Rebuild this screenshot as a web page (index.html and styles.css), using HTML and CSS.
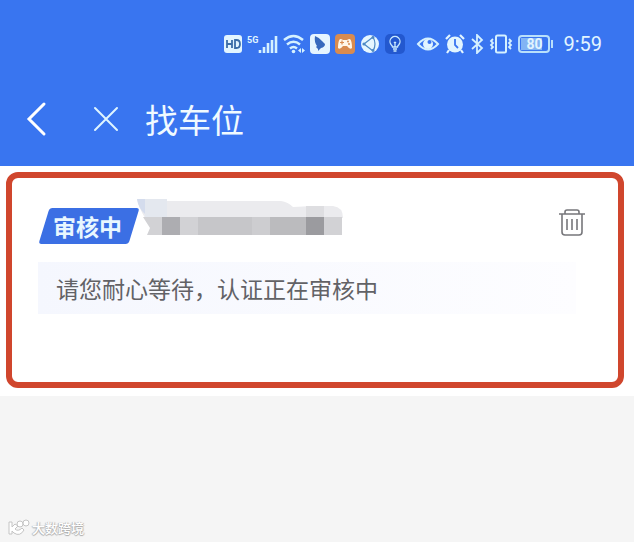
FILE: index.html
```html
<!DOCTYPE html>
<html lang="zh-CN">
<head>
  <meta charset="UTF-8">
  <meta name="viewport" content="width=device-width, initial-scale=1.0">
  <title>找车位</title>
  <link rel="stylesheet" href="styles.css">
</head>
<body>

  <header class="header">
    <div class="status-bar">
      <svg width="18" height="18" viewBox="0 0 18 18"><rect width="18" height="18" rx="3" fill="#e2f5ff"/><path d="M3 5v8M8 5v8M3 9h5M11 5v8h1.500q3.500 0 3.500-4t-3.500-4z" fill="none" stroke="#3c6ea8" stroke-width="1.800"/></svg>
      <div class="signal">
        <span class="network">5G</span>
        <svg width="20" height="20" viewBox="0 0 20 20"><path d="M2 16v3M6 13v6M10 9v10M14 6v13M18 2v17" stroke="#d5f1ff" stroke-width="2.600"/></svg>
      </div>
      <svg width="22" height="20" viewBox="0 0 22 20" fill="none" stroke="#d5f1ff" stroke-width="2.400"><path d="M1 6q9.500-8 19 0M4 10.500q6.500-5.500 13 0M7 14.500q3.500-3 7 0"/><circle cx="10.500" cy="17.500" r="1.800" fill="#d5f1ff" stroke="none"/><path d="M18 14v5l-3-2.500zM19 14v5l3-2.500z" fill="#d5f1ff" stroke="none"/></svg>
      <svg width="20" height="20" viewBox="0 0 20 20"><rect width="20" height="20" rx="4" fill="#e6f5ff"/><path d="M5 2q5 2 7 5l3 3q0 3-4 4l-1 1-2 2 0-2-2-2 1-1q-3-4-2-10z" fill="#3769bd"/></svg>
      <svg width="20" height="20" viewBox="0 0 20 20"><rect width="20" height="20" rx="4" fill="#d98b4f"/><path d="M5 5q2 0 3 1h4q1-1 3-1 2 2 2 9-2 2-5-2H8q-3 4-5 2Q3 7 5 5z" fill="#fff6e8"/><path d="M5 8.500h4M7 6.500v4" stroke="#d98b4f" stroke-width="1.200"/><circle cx="13" cy="7.500" r="1" fill="#d98b4f"/><circle cx="14" cy="10" r="1" fill="#d98b4f"/></svg>
      <svg width="20" height="20" viewBox="0 0 20 20"><circle cx="10" cy="10" r="9" fill="#e6f7ff"/><path d="M4 10l9-7M4 10l9 7M13 3q4 7 0 14" fill="none" stroke="#4e8ac4" stroke-width="1.200"/><circle cx="4" cy="10" r="1.600" fill="#4e8ac4"/><circle cx="13" cy="3.500" r="1.400" fill="#4e8ac4"/><circle cx="13" cy="16.500" r="1.400" fill="#4e8ac4"/></svg>
      <svg width="20" height="20" viewBox="0 0 20 20"><rect width="20" height="20" rx="5" fill="#2358cf"/><path d="M7.500 13q0-1-1.500-2.500a5 5 0 1 1 8 0Q12.500 12 12.500 13zM8 15h4M8.500 17h3M9 8l1 1 1-1M10 9v4" fill="none" stroke="#c9eaff" stroke-width="1.300"/></svg>
      <svg class="eye" width="24" height="20" viewBox="0 0 24 20"><path d="M2 10Q12-1 22 10 12 21 2 10z" fill="none" stroke="#d5f1ff" stroke-width="2"/><circle cx="12" cy="10" r="5" fill="#e2f5ff"/><circle cx="13.500" cy="8" r="2" fill="#3975f0"/></svg>
      <svg width="20" height="20" viewBox="0 0 20 20"><circle cx="10" cy="10.500" r="8" fill="#e2f5ff"/><path d="M1 5l4-4M19 5l-4-4M4 16l-2 3M16 16l2 3" stroke="#e2f5ff" stroke-width="2.200"/><path d="M10 5v6l3 3" fill="none" stroke="#3975f0" stroke-width="1.800"/></svg>
      <svg width="14" height="20" viewBox="0 0 14 20"><path d="M2 5l10 9-5 5V1l5 5-10 9" fill="none" stroke="#d5f1ff" stroke-width="1.800"/></svg>
      <svg width="24" height="20" viewBox="0 0 24 20" fill="none" stroke="#d5f1ff"><rect x="7" y="1.500" width="10" height="17" rx="1.500" stroke-width="2"/><path d="M4 5L2 7l2 2-2 2 2 2-2 2M20 5l2 2-2 2 2 2-2 2 2 2" stroke-width="1.800"/></svg>
      <div class="battery"><span class="battery-level">80</span></div>
      <span class="time">9:59</span>
    </div>

    <nav class="nav">
      <button class="nav-button" aria-label="返回">
        <svg width="24" height="36" viewBox="0 0 24 36"><path d="M20 3L5 18l15 15" fill="none" stroke="#fff" stroke-width="3" stroke-linecap="round"/></svg>
      </button>
      <button class="nav-button" aria-label="关闭">
        <svg width="28" height="28" viewBox="0 0 28 28"><path d="M3 3l22 22M25 3L3 25" stroke="#dff5ff" stroke-width="2" stroke-linecap="round"/></svg>
      </button>
      <h1 class="title">找车位</h1>
    </nav>
  </header>

  <main class="content">
    <section class="card">
      <div class="card-head">
        <span class="badge">审核中</span>
        <svg class="plate" width="206" height="46" viewBox="0 0 206 46">
          <path d="M0 2h20l8 2h116q7 1 12 6l20-1h20q10 1 10 12H8Q2 11 0 2z" fill="#ebebee"/>
          <path d="M0 2h8v15Q1 11 0 2z" fill="#d4dced"/>
          <path d="M8 2h22v18H8z" fill="#e4e8ef"/>
          <path d="M6 20h199v18H10l3-7z" fill="#d2d2d5"/>
          <path d="M25 20h18v18H25z" fill="#adadb1"/>
          <path d="M61 20h54v18H61z" fill="#c6c6c9"/>
          <path d="M115 20h18v18h-18z" fill="#cdcdd0"/>
          <path d="M133 20h36v18h-36z" fill="#bbbbbe"/>
          <path d="M169 9h18v11h-18z" fill="#dedee1"/>
          <path d="M169 20h18v18h-18z" fill="#9b9b9f"/>
        </svg>
        <button class="delete" aria-label="删除">
          <svg width="28" height="28" viewBox="0 0 28 28" fill="none" stroke="#77777b" stroke-width="1.600"><path d="M1 6h26M7 6V4q0-2 2-2h10q2 0 2 2v2M4 6v18q0 3 3 3h14q3 0 3-3V6M9 11v11M14 11v11M19 11v11"/></svg>
        </button>
      </div>
      <p class="message">请您耐心等待，认证正在审核中</p>
    </section>
  </main>

  <footer class="watermark">
    <svg width="24" height="18" viewBox="0 0 24 18" fill="#fff" stroke="#c4c4c4"><path d="M1 3h3v5l3-3 3 2-3 3q3 3 7-1l2 2q-4 7-10 3l-2-2v3H1z"/><circle cx="12" cy="5" r="3"/><circle cx="18" cy="4" r="3"/></svg>
    <span class="watermark-text">大数跨境</span>
  </footer>

</body>
</html>
```
FILE: styles.css
```css
* {
  box-sizing: border-box;
}

body {
  margin: 0;
  min-height: 100vh;
  display: flex;
  flex-direction: column;
  background: #f5f5f5;
  font-family: "Noto Sans CJK SC", sans-serif;
}

svg {
  display: block;
  flex-shrink: 0;
}

button {
  padding: 0;
  border: none;
  background: none;
}

.header {
  padding: 32px 32px 22px 24px;
  background: #3975f0;
}

.status-bar {
  display: flex;
  align-items: center;
  justify-content: flex-end;
  gap: 5px;
  height: 24px;
  color: #e2f5ff;
}

.signal {
  display: flex;
}

.network {
  font: bold 9px/12px Roboto, sans-serif;
}

.eye {
  margin-left: 6px;
}

.battery {
  position: relative;
  width: 32px;
  height: 18px;
  padding: 1px;
  margin-right: 8px;
  border: 2px solid #b9e0fb;
  border-radius: 4px;
}

.battery::after {
  content: "";
  position: absolute;
  top: 3px;
  right: -5px;
  width: 2px;
  height: 8px;
  background: #b9e0fb;
}

.battery-level {
  display: block;
  background: linear-gradient(to right, #82b4f4 80%, transparent 80%);
  font: bold 14px/12px Roboto, sans-serif;
  text-align: center;
}

.time {
  font: 20px/24px Roboto, sans-serif;
}

.nav {
  display: flex;
  align-items: center;
  height: 50px;
  margin-top: 38px;
}

.nav-button {
  margin-right: 44px;
}

.nav-button + .nav-button {
  margin-right: 25px;
}

.title {
  margin: 0;
  color: #f0faff;
  font-size: 33px;
  font-weight: 400;
  line-height: 48px;
}

.content {
  padding: 6px 10px 8px 6px;
  background: #fff;
}

.card {
  min-height: 216px;
  padding: 18px 32px 60px 26px;
  border: 6px solid #d0462d;
  border-radius: 12px;
}

.card-head {
  display: flex;
  align-items: center;
}

.badge {
  position: relative;
  z-index: 0;
  width: 102px;
  margin-top: 12px;
  padding: 0 15px;
  color: #e8f7ff;
  font-size: 23px;
  font-weight: 700;
  line-height: 36px;
  white-space: nowrap;
}

.badge::before {
  content: "";
  position: absolute;
  inset: 0 6px;
  z-index: -1;
  border-radius: 3px;
  background: #3b6fe4;
  transform: skewX(-17deg);
}

.plate {
  margin-left: -3px;
}

.delete {
  margin-left: auto;
  padding-top: 4px;
}

.message {
  margin: 18px 10px 0 0;
  padding: 0 18px;
  background: linear-gradient(to right, #f5f7fe, #fdfdff);
  color: #626266;
  font-size: 23px;
  line-height: 52px;
}

.watermark {
  display: flex;
  align-items: center;
  margin-top: auto;
  padding: 0 8px 4px;
}

.watermark-text {
  color: #fff;
  font-size: 13px;
  font-weight: 500;
  line-height: 20px;
  text-shadow: 0 1px 1px #aaa, 1px 0 1px #bbb, -1px 0 1px #bbb;
}
```
